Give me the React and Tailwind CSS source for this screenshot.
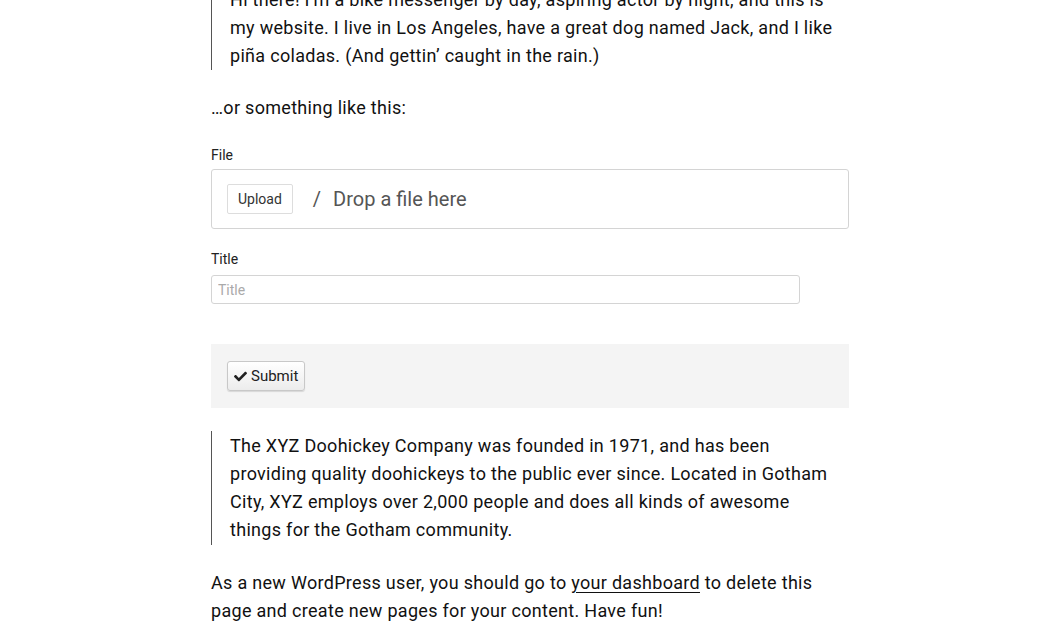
import React from 'react';

function Check() {
  return (
    <svg viewBox="0 0 512 512" className="w-[13px] h-[13px]" fill="#222">
      <path d="M173.9 439.4l-166.4-166.4c-10-10-10-26.2 0-36.2l36.2-36.2c10-10 26.2-10 36.2 0L192 312.7 432.1 72.6c10-10 26.2-10 36.2 0l36.2 36.2c10 10 10 26.2 0 36.2L210.1 439.4c-10 10-26.2 10-36.2 0z" />
    </svg>
  );
}

export default function App() {
  return (
    <div className="bg-white min-h-screen overflow-hidden font-['Roboto',sans-serif] text-[#111]">
      <div className="w-[638px] ml-[211px]">
        <blockquote className="mt-[-14px] border-l border-[#555] pl-[18px] pr-[12px] text-[18px] leading-[28px] tracking-[0.3px]">
          Hi there! I’m a bike messenger by day, aspiring actor by night, and this is my website. I live in Los Angeles, have a great dog named Jack, and I like piña coladas. (And gettin’ caught in the rain.)
        </blockquote>

        <p className="mt-[24px] text-[18px] leading-[28px] tracking-[0.3px]">…or something like this:</p>

        <form className="mt-[24px]">
          <label className="block text-[14px] leading-[18px] text-[#222]">File</label>
          <div className="mt-[5px] h-[60px] border border-[#d4d4d4] rounded-[3px] flex items-center px-[15px]">
            <button type="button" className="h-[30px] px-[10px] border border-[#ddd] rounded-[2px] bg-white text-[14px] text-[#333]">
              Upload
            </button>
            <span className="ml-[20px] text-[20px] text-[#555]">/</span>
            <span className="ml-[12px] text-[20px] text-[#555]">Drop a file here</span>
          </div>

          <label className="block mt-[21px] text-[14px] leading-[18px] text-[#222]">Title</label>
          <input
            type="text"
            placeholder="Title"
            className="mt-[7px] block w-[589px] h-[29px] border border-[#d4d4d4] rounded-[3px] px-[6px] text-[14px] placeholder:text-[#aaa] outline-none"
          />

          <div className="mt-[40px] h-[64px] bg-[#f4f4f4] flex items-center px-[16px]">
            <button type="button" className="h-[30px] px-[6px] flex items-center gap-[4px] border border-[#c8c8c8] rounded-[3px] bg-gradient-to-b from-white to-[#ececec] shadow-[0_1px_1px_rgba(0,0,0,0.12)] text-[15px] text-[#222]">
              <Check />
              Submit
            </button>
          </div>
        </form>

        <blockquote className="mt-[23px] border-l border-[#555] pl-[18px] pr-[12px] py-[1px] text-[18px] leading-[28px] tracking-[0.3px]">
          The XYZ Doohickey Company was founded in 1971, and has been providing quality doohickeys to the public ever since. Located in Gotham City, XYZ employs over 2,000 people and does all kinds of awesome things for the Gotham community.
        </blockquote>

        <p className="mt-[24px] text-[18px] leading-[28px] tracking-[0.3px]">
          As a new WordPress user, you should go to <a href="#" className="underline underline-offset-[3px]">your dashboard</a> to delete this page and create new pages for your content. Have fun!
        </p>
      </div>
    </div>
  );
}
